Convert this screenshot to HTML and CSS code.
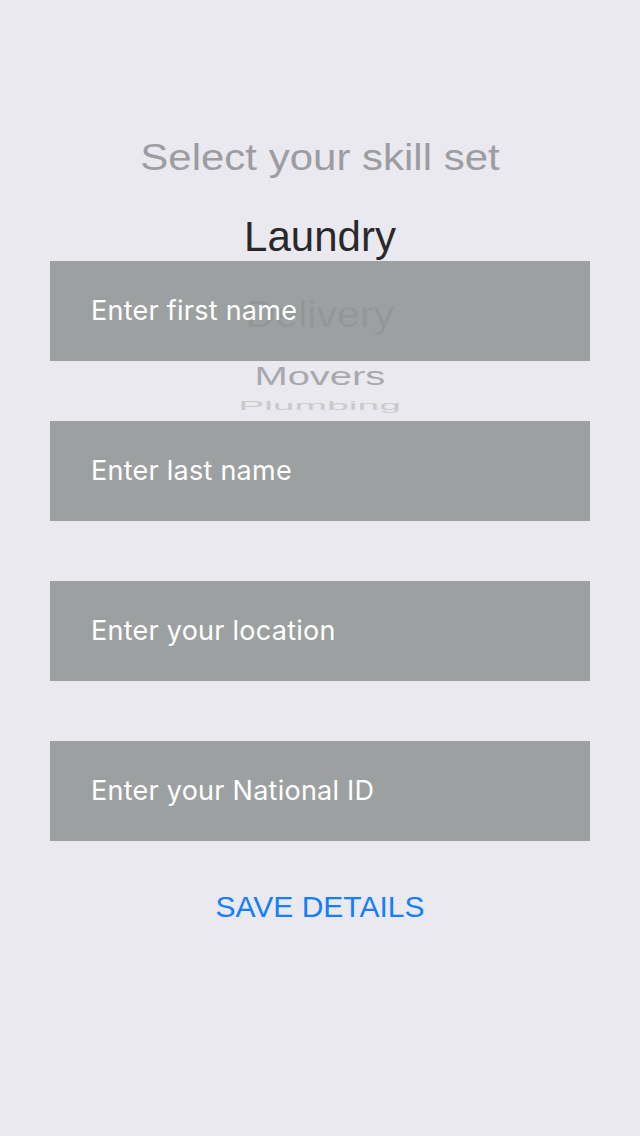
FILE: index.html
```html
<!DOCTYPE html>
<html>
<head>
<meta charset="utf-8">
<link rel="stylesheet" href="styles.css">
</head>
<body>
<div class="screen">
  <div class="picker">
    <div class="item item-title">Select your skill set</div>
    <div class="item item-selected">Laundry</div>
    <div class="item item-next">Delivery</div>
    <div class="item item-far">Movers</div>
    <div class="item item-farthest">Plumbing</div>
  </div>
  <form class="form">
    <div class="field"><span class="placeholder">Enter first name</span></div>
    <div class="field"><span class="placeholder">Enter last name</span></div>
    <div class="field"><span class="placeholder">Enter your location</span></div>
    <div class="field"><span class="placeholder">Enter your National ID</span></div>
    <div class="save">SAVE DETAILS</div>
  </form>
</div>
</body>
</html>
```
FILE: styles.css
```css
html, body {
  margin: 0;
  padding: 0;
}
body {
  background: #eae9ef;
  width: 640px;
  height: 1136px;
  overflow: hidden;
}
.screen {
  position: relative;
  height: 1136px;
}
.picker {
  position: absolute;
  top: 118px;
  left: 0;
  right: 0;
  height: 295px;
  overflow: hidden;
  z-index: 1;
  display: flex;
  flex-direction: column;
  align-items: center;
  font-family: "Liberation Sans", Arial, sans-serif;
  font-size: 42px;
}
.item {
  flex: none;
  text-align: center;
  white-space: nowrap;
  display: flex;
  align-items: center;
  justify-content: center;
}
.item-title {
  height: 80px;
  color: #9c9ca1;
  transform: scaleY(0.88);
}
.item-selected {
  height: 78px;
  color: #29292b;
}
.item-next {
  height: 78px;
  color: rgba(0, 0, 0, 0.08);
  transform: scale(0.98, 0.88);
}
.item-far {
  height: 44px;
  color: #a9a9ad;
  transform: scale(0.95, 0.62);
}
.item-farthest {
  height: 16px;
  color: #cacace;
  transform: scale(0.93, 0.3);
}
.form {
  margin: 0;
  padding: 261px 50px 0;
  display: flex;
  flex-direction: column;
  gap: 60px;
}
.field {
  height: 100px;
  background: #9da0a1;
  display: flex;
  align-items: center;
  padding-left: 41px;
}
.placeholder {
  position: relative;
  z-index: 2;
  top: -1px;
  color: #ffffff;
  font-family: "Inter", "Liberation Sans", sans-serif;
  font-size: 27px;
  letter-spacing: 0.25px;
}
.save {
  margin-top: -14px;
  height: 40px;
  line-height: 40px;
  text-align: center;
  color: #147efb;
  font-family: "Liberation Sans", Arial, sans-serif;
  font-size: 30px;
}
```
